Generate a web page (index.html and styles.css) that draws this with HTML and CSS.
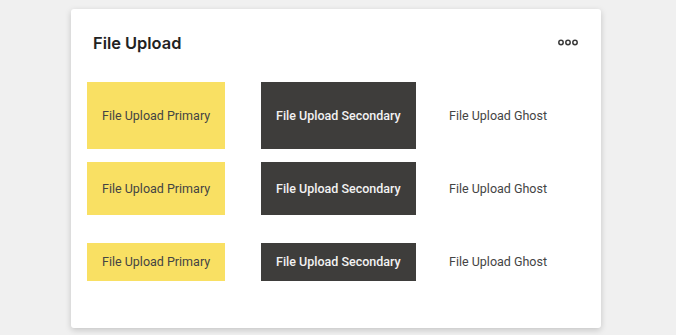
FILE: index.html
```html
<!DOCTYPE html>
<html lang="en">
<head>
    <meta charset="UTF-8">
    <meta name="viewport" content="width=device-width, initial-scale=1.0">
    <title>File Upload</title>
    <link rel="stylesheet" href="styles.css">
</head>
<body>
    <div class="card">
        <div class="card-header">
            <h2>File Upload</h2>
            <button class="more-button" aria-label="More">
                <svg width="20" height="7" viewBox="0 0 20 7">
                    <circle cx="3" cy="3.5" r="2.2" />
                    <circle cx="10" cy="3.5" r="2.2" />
                    <circle cx="17" cy="3.5" r="2.2" />
                </svg>
            </button>
        </div>

        <div class="upload-grid">
            <!-- large -->
            <button class="upload-button primary large">File Upload Primary</button>
            <button class="upload-button secondary large">File Upload Secondary</button>
            <button class="upload-button ghost large">File Upload Ghost</button>

            <!-- medium -->
            <button class="upload-button primary medium">File Upload Primary</button>
            <button class="upload-button secondary medium">File Upload Secondary</button>
            <button class="upload-button ghost medium">File Upload Ghost</button>

            <!-- small -->
            <button class="upload-button primary small">File Upload Primary</button>
            <button class="upload-button secondary small">File Upload Secondary</button>
            <button class="upload-button ghost small">File Upload Ghost</button>
        </div>
    </div>
</body>
</html>
```

FILE: styles.css
```css
body {
    margin: 0;
    height: 100vh;
    background: #f0f0f0;
    font-family: Roboto, "Liberation Sans", sans-serif;
}

.card {
    width: 530px;
    height: 319px;
    box-sizing: border-box;
    margin: 9px 0 0 71px;
    padding: 0 16px;
    background: #fff;
    border-radius: 3px;
    box-shadow: 0 2px 6px rgba(0, 0, 0, 0.18);
}

.card-header {
    display: flex;
    justify-content: space-between;
    align-items: center;
    height: 67px;
    padding: 0 7px 0 6px;
}

.card-header h2 {
    margin: 0;
    padding-top: 1px;
    font-family: Inter, "Noto Sans", sans-serif;
    font-size: 16.4px;
    font-weight: 600;
    color: #222;
}

.more-button {
    background: none;
    border: none;
    padding: 0;
    cursor: pointer;
    display: flex;
}

.more-button circle {
    fill: none;
    stroke: #3a3a3a;
    stroke-width: 1.5;
}

.upload-grid {
    display: grid;
    grid-template-columns: 174px 173px auto;
    grid-auto-rows: 73px;
    align-items: center;
    justify-items: start;
    margin-top: 3px;
}

.upload-button {
    border: none;
    padding: 0 15px;
    font-family: Roboto, "Liberation Sans", sans-serif;
    font-size: 12.5px;
    cursor: pointer;
}

.upload-button.large {
    height: 67px;
}

.upload-button.medium {
    height: 53px;
}

.upload-button.small {
    height: 38px;
}

.primary {
    background: #f9e063;
    color: #444;
}

.secondary {
    background: #3e3d3b;
    color: #f2f2f2;
    font-weight: 500;
}

.ghost {
    background: transparent;
    color: #444;
}
```
